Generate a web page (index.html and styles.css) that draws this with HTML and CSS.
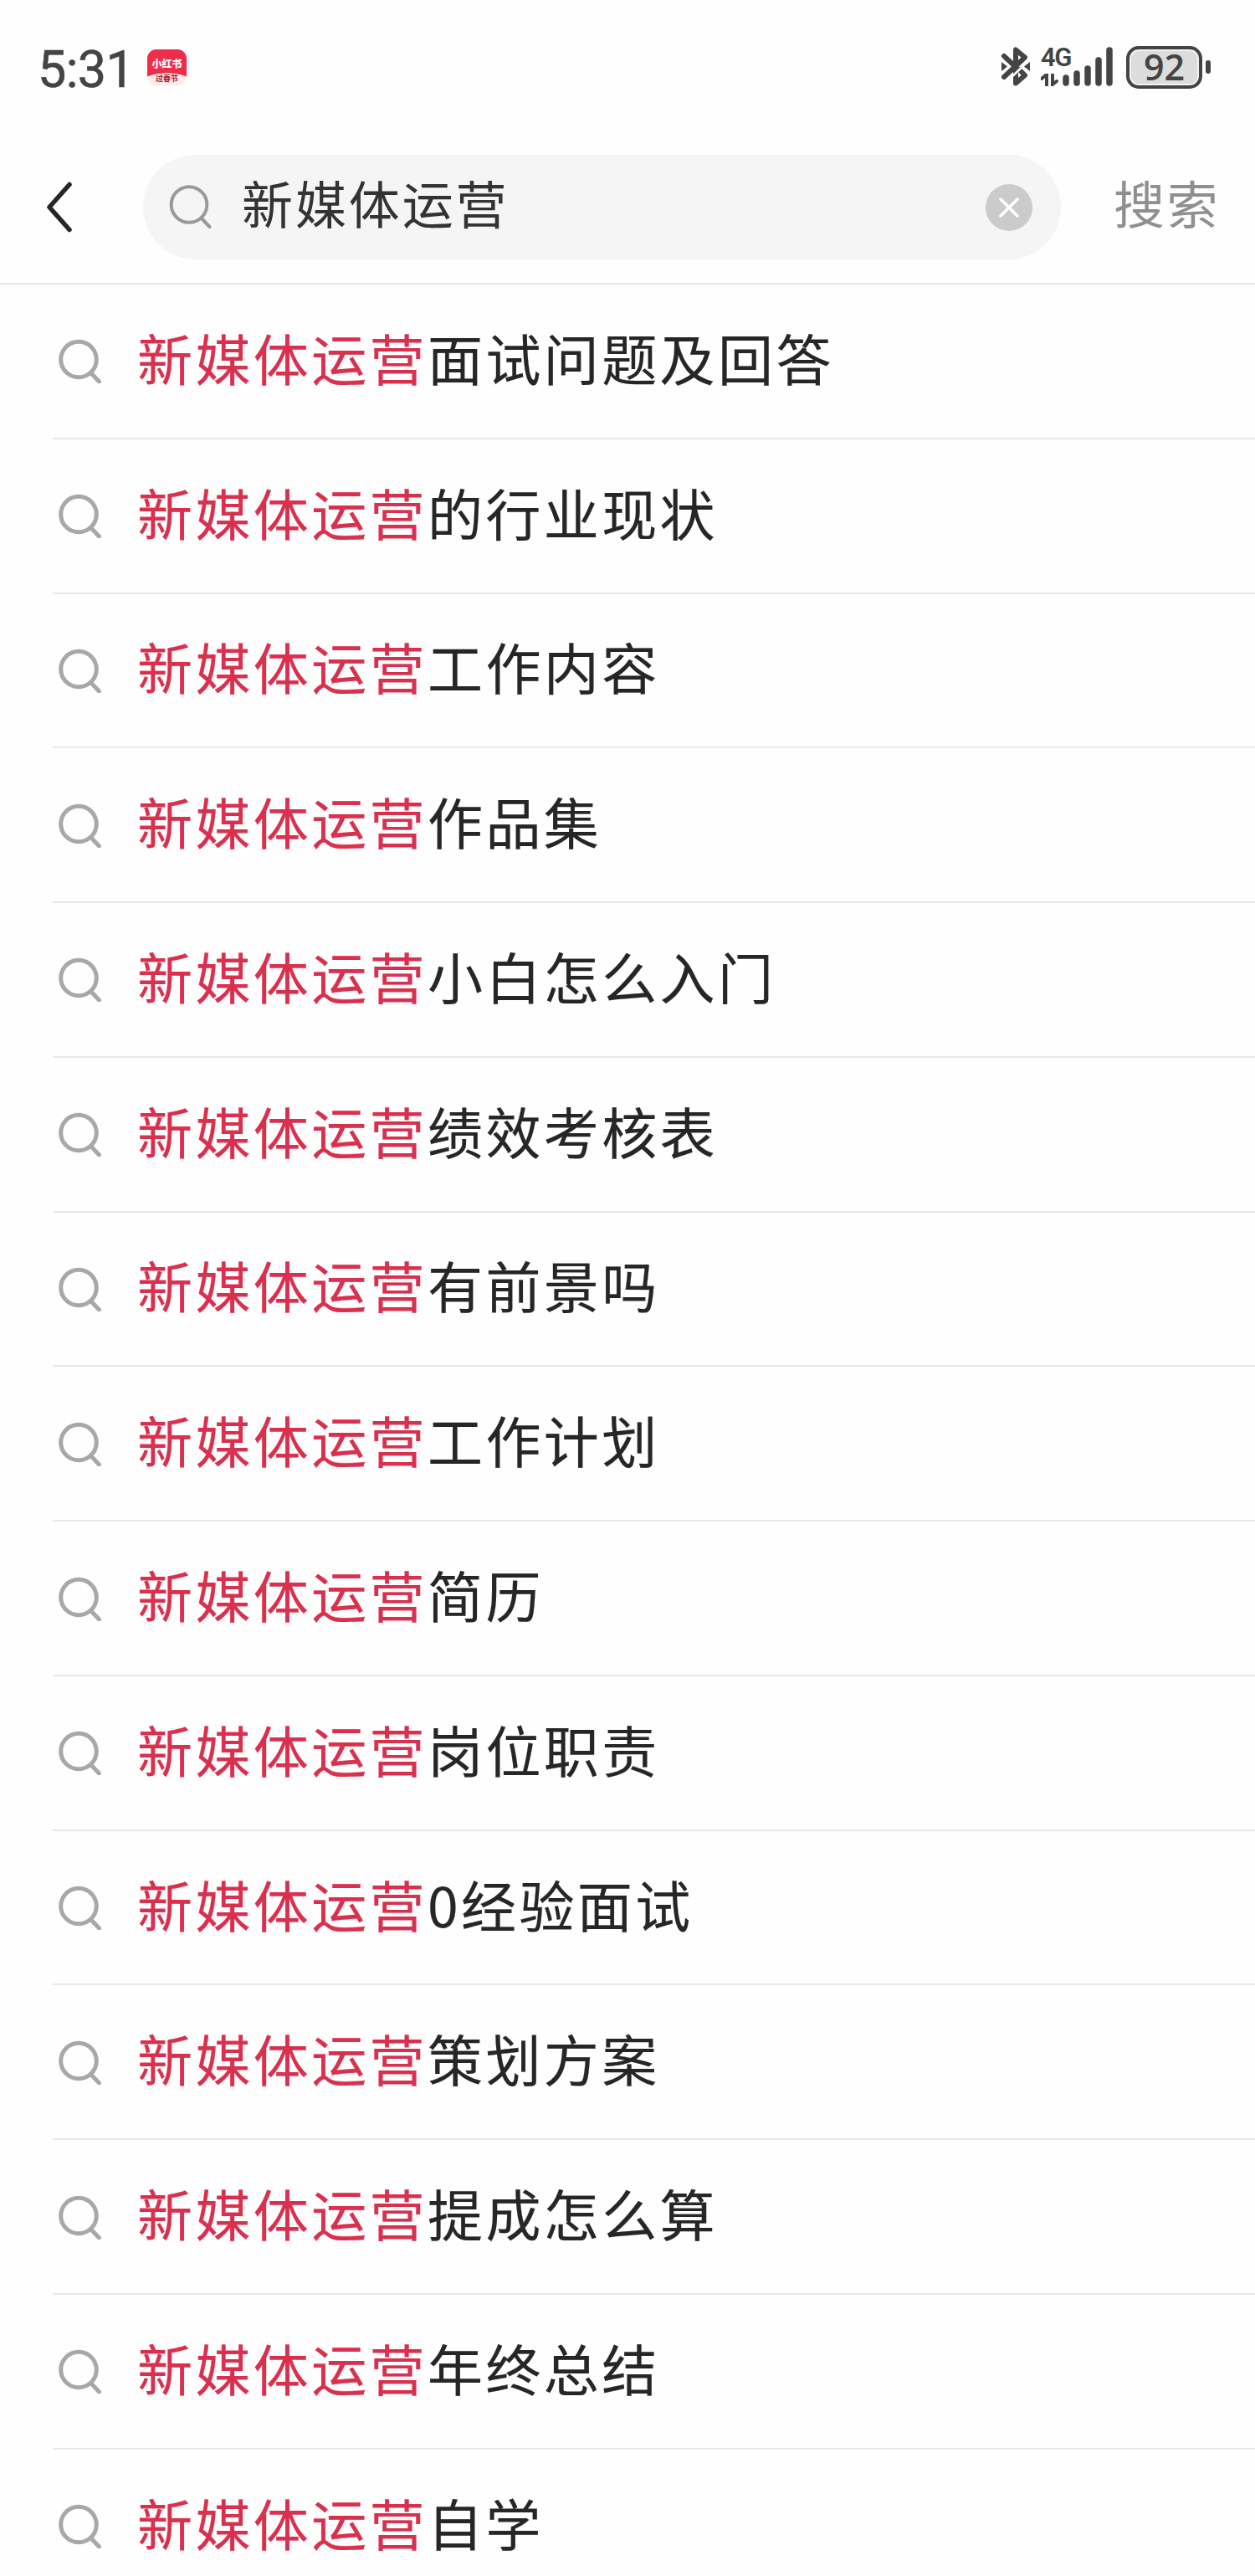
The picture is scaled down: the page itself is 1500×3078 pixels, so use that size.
FILE: index.html
```html
<!DOCTYPE html>
<html lang="zh-CN">
<head>
<meta charset="utf-8">
<meta name="viewport" content="width=device-width, initial-scale=1">
<title>新媒体运营</title>
<link rel="stylesheet" href="styles.css">
</head>
<body>

<svg class="defs" width="0" height="0">
  <symbol id="search" viewBox="0 0 54 54">
    <circle cx="25" cy="25.5" r="21.3"/>
    <path d="M39.5 41.5L49.5 52"/>
  </symbol>
</svg>

<div class="status">
  <span class="time">5:31</span>
  <div class="app">
    <span class="app-name">小红书</span>
    <span class="app-sub">过春节</span>
  </div>
  <svg class="bluetooth" width="36" height="50" viewBox="0 0 36 50">
    <path d="M4 12L18 25M4 37L29 13.5L18 4.5V22M18 31V44.5L29 35L22 28"/>
    <path class="gap" d="M10 40L33 18"/>
    <path class="solid" d="M1 19L8 24.5L1 30ZM35 19L28 24.5L35 30Z"/>
  </svg>
  <div class="network">
    <span class="net-type">4G</span>
    <svg width="22" height="15" viewBox="0 0 22 15">
      <path d="M1 6L7 1V14M14 1V13L19 9"/>
    </svg>
  </div>
  <svg class="signal" width="60" height="48" viewBox="0 0 60 48">
    <path d="M4 37V43M17 32V43M30 26V43M43 16V43M56 4V43"/>
  </svg>
  <div class="battery">92</div>
  <div class="battery-tip"></div>
</div>

<div class="header">
  <svg class="back" width="34" height="64" viewBox="0 0 34 64">
    <path d="M31 4.5L7 31.5L31 58.5"/>
  </svg>
  <div class="search-box">
    <svg class="icon"><use href="#search"/></svg>
    <span class="keyword">新媒体运营</span>
    <svg class="clear" width="56" height="56" viewBox="0 0 56 56">
      <circle cx="28" cy="28" r="28"/>
      <path d="M18 18L38 38M38 18L18 38"/>
    </svg>
  </div>
  <span class="search-btn">搜索</span>
</div>

<ul class="list">
  <li><svg class="icon"><use href="#search"/></svg><span><b>新媒体运营</b>面试问题及回答</span></li>
  <li><svg class="icon"><use href="#search"/></svg><span><b>新媒体运营</b>的行业现状</span></li>
  <li><svg class="icon"><use href="#search"/></svg><span><b>新媒体运营</b>工作内容</span></li>
  <li><svg class="icon"><use href="#search"/></svg><span><b>新媒体运营</b>作品集</span></li>
  <li><svg class="icon"><use href="#search"/></svg><span><b>新媒体运营</b>小白怎么入门</span></li>
  <li><svg class="icon"><use href="#search"/></svg><span><b>新媒体运营</b>绩效考核表</span></li>
  <li><svg class="icon"><use href="#search"/></svg><span><b>新媒体运营</b>有前景吗</span></li>
  <li><svg class="icon"><use href="#search"/></svg><span><b>新媒体运营</b>工作计划</span></li>
  <li><svg class="icon"><use href="#search"/></svg><span><b>新媒体运营</b>简历</span></li>
  <li><svg class="icon"><use href="#search"/></svg><span><b>新媒体运营</b>岗位职责</span></li>
  <li><svg class="icon"><use href="#search"/></svg><span><b>新媒体运营</b>0经验面试</span></li>
  <li><svg class="icon"><use href="#search"/></svg><span><b>新媒体运营</b>策划方案</span></li>
  <li><svg class="icon"><use href="#search"/></svg><span><b>新媒体运营</b>提成怎么算</span></li>
  <li><svg class="icon"><use href="#search"/></svg><span><b>新媒体运营</b>年终总结</span></li>
  <li><svg class="icon"><use href="#search"/></svg><span><b>新媒体运营</b>自学</span></li>
</ul>

</body>
</html>
```
FILE: styles.css
```css
* {
  box-sizing: border-box;
}

body {
  margin: 0;
  height: 3078px;
  overflow: hidden;
  background-color: #fefefe;
  color: #262626;
  font-family: "Noto Sans CJK SC", sans-serif;
}

svg {
  display: block;
  flex: none;
  fill: none;
  stroke-linecap: round;
}

.defs {
  position: absolute;
}

.icon {
  width: 54px;
  height: 54px;
  stroke: #a8a8a8;
  stroke-width: 5px;
}

/* status bar */
.status {
  display: flex;
  align-items: center;
  height: 160px;
  padding: 0 0 0 45px;
  color: #444;
}

.time {
  width: 131px;
  padding-top: 5px;
  font-family: Roboto, sans-serif;
  font-size: 61px;
  letter-spacing: -0.6px;
  line-height: 60px;
  -webkit-text-stroke: 0.6px #444;
}

.app {
  display: flex;
  flex-direction: column;
  align-items: center;
  width: 47px;
  height: 43px;
  overflow: hidden;
  border-radius: 11px;
  background: radial-gradient(ellipse 34px 15px at 50% 100%, #fdeee9 96%, #ee2d4a 100%);
  font-weight: 900;
  white-space: nowrap;
}

.app-name {
  margin-top: 9px;
  color: #fff;
  font-size: 12px;
  line-height: 16px;
}

.app-sub {
  margin-top: 5px;
  color: #b5243c;
  font-size: 9px;
  line-height: 10px;
}

.bluetooth {
  margin-left: auto;
  stroke: #444;
  stroke-width: 6px;
  stroke-linejoin: round;
}

.bluetooth .gap {
  stroke: #fefefe;
  stroke-width: 2.5px;
}

.bluetooth .solid {
  fill: #444;
  stroke: none;
}

.network {
  width: 38px;
  height: 48px;
  margin-left: 12px;
}

.net-type {
  display: block;
  height: 32px;
  font-family: Roboto, sans-serif;
  font-size: 31px;
  font-weight: 600;
  letter-spacing: -1.5px;
  line-height: 26px;
}

.network svg {
  stroke: #444;
  stroke-width: 4px;
}

.signal {
  margin-left: -12px;
  stroke: #444;
  stroke-width: 7.5px;
}

.battery {
  width: 91px;
  height: 51px;
  margin-left: 16px;
  border: 4px solid #444;
  border-radius: 15px;
  background-color: #dcdcdc;
  box-shadow: inset 0 0 0 2px #f2f2f2;
  font-family: "Open Sans", sans-serif;
  font-size: 43px;
  font-weight: 600;
  line-height: 42px;
  text-align: center;
}

.battery-tip {
  width: 6px;
  height: 16px;
  margin: 0 53px 0 4px;
  border-radius: 3px;
  background-color: #444;
}

/* search bar */
.header {
  display: flex;
  align-items: center;
  height: 180px;
  padding: 3px 0 6px 52px;
  border-bottom: 2px solid #e6e6e6;
  font-size: 61px;
}

.back {
  stroke: #262626;
  stroke-width: 5.5px;
  stroke-linejoin: round;
}

.search-box {
  display: flex;
  align-items: center;
  width: 1097px;
  height: 125px;
  margin-left: 85px;
  padding: 0 34px 0 30px;
  border-radius: 63px;
  background-color: #f5f5f5;
}

.search-box .icon {
  margin-bottom: 3px;
  stroke: #999;
  stroke-width: 4px;
}

.keyword {
  margin-left: 34px;
  padding-bottom: 11px;
  color: #333;
  letter-spacing: 2.9px;
  line-height: 80px;
}

.clear {
  margin-left: auto;
  fill: #cbcbcb;
  stroke: none;
}

.clear path {
  stroke: #fff;
  stroke-width: 3.5px;
}

.search-btn {
  margin-left: 63px;
  padding-bottom: 11px;
  color: #8f8f8f;
  letter-spacing: 2.5px;
  line-height: 80px;
}

/* suggestions */
.list {
  margin: 0 0 0 63px;
  padding: 0;
  list-style: none;
  font-size: 66px;
  letter-spacing: 3.4px;
}

.list li {
  display: flex;
  align-items: center;
  gap: 41px;
  height: 184.77px;
  padding-left: 6px;
  border-bottom: 2px solid #e8e8e8;
}

.list span {
  padding-bottom: 11px;
  line-height: 90px;
  -webkit-text-stroke: 0.2px;
}

.list b {
  color: #d9304e;
  font-weight: normal;
}
```
